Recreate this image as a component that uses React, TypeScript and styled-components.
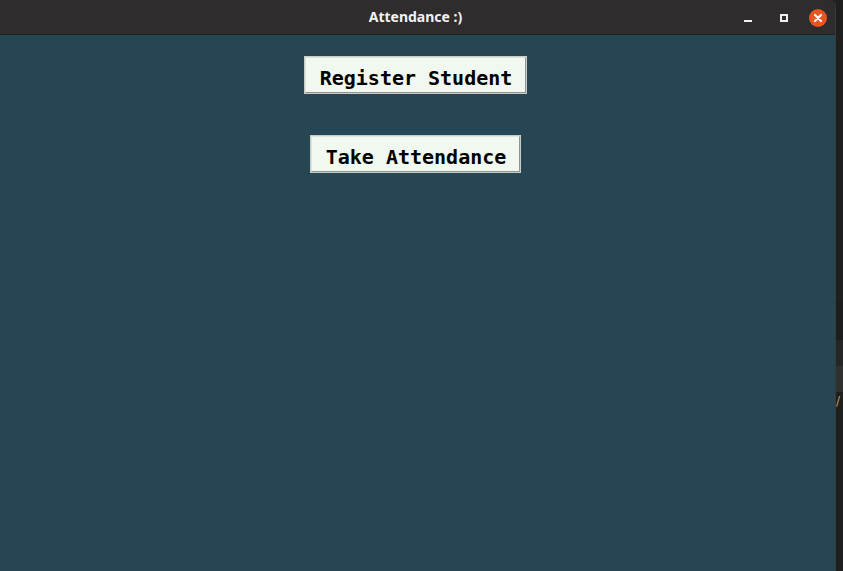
import styled, {createGlobalStyle} from 'styled-components'

const GlobalStyle = createGlobalStyle`
  html, body {
    margin: 0;
    padding: 0;
    background: #222121;
    overflow: hidden;
  }
  #root {
    height: 100vh;
  }
`

const App = () => {
  return (
    <>
      <GlobalStyle/>
      <Desktop>
        <Window>
          <TitleBar>
            <Title>Attendance :)</Title>
            <Controls>
              <Minimize/>
              <Maximize/>
              <Close>
                <svg width="10" height="10" viewBox="0 0 10 10">
                  <path d="M2 2 L8 8 M8 2 L2 8" stroke="#fff" strokeWidth="2.2" strokeLinecap="round"/>
                </svg>
              </Close>
            </Controls>
          </TitleBar>
          <Content>
            <TkButton>Register Student</TkButton>
            <TkButton>Take Attendance</TkButton>
          </Content>
        </Window>
        <SideStrip>
          <StripBlock h={40} bg='#1d1d1d'/>
          <StripBlock h={26} bg='#262626'/>
          <StripBlock h={26} bg='#303030'/>
          <Slash>/</Slash>
          <StripBlock h={0} bg='#1f1f1f' grow/>
        </SideStrip>
      </Desktop>
    </>
  )
}

export default App;

const Desktop = styled.div`
  display: flex;
  height: 571px;
  width: 843px;
`
const Window = styled.div`
  width: 836px;
  display: flex;
  flex-direction: column;
  border-right: 1px solid #3a3a3a;
  box-sizing: border-box;
  border-top-right-radius: 6px;
  overflow: hidden;
`
const TitleBar = styled.div`
  height: 35px;
  flex-shrink: 0;
  background: #2e2c2c;
  border-bottom: 1px solid #232222;
  box-sizing: border-box;
  display: flex;
  align-items: center;
  justify-content: center;
  position: relative;
`
const Title = styled.div`
  font-family: "Noto Sans", "DejaVu Sans", sans-serif;
  font-weight: bold;
  font-size: 14px;
  color: #f2f2f2;
  margin-left: -4px;
  margin-top: -1px;
`
const Controls = styled.div`
  position: absolute;
  right: 8px;
  top: 0;
  height: 35px;
  display: flex;
  align-items: center;
`
const Minimize = styled.div`
  width: 8px;
  height: 2px;
  background: #f0f0f0;
  margin-top: 6px;
  margin-right: 28px;
`
const Maximize = styled.div`
  width: 8px;
  height: 8px;
  border: 2px solid #f0f0f0;
  box-sizing: border-box;
  margin-right: 21px;
`
const Close = styled.div`
  width: 18px;
  height: 18px;
  border-radius: 50%;
  background: #e95420;
  display: flex;
  align-items: center;
  justify-content: center;
`
const Content = styled.div`
  flex: 1;
  background: #264653;
  display: flex;
  flex-direction: column;
  align-items: center;
  padding-top: 21px;
  padding-right: 4px;
  gap: 41px;
`
const TkButton = styled.button`
  height: 38px;
  box-sizing: border-box;
  padding: 6px 13px 0 14px;
  background: #f0f8ef;
  border: 2px solid;
  border-color: #dfe4df #8f9490 #8f9490 #dfe4df;
  outline: 1px solid #c9ccc9;
  outline-offset: -1px;
  font-family: "DejaVu Sans Mono", "Liberation Mono", monospace;
  font-weight: bold;
  font-size: 20px;
  color: #000;
  line-height: 1;
`
const SideStrip = styled.div`
  flex: 1;
  display: flex;
  flex-direction: column;
  background: #1f1f1f;
  padding-top: 300px;
`
const StripBlock = styled.div<{h:number, bg:string, grow?:boolean}>`
  height: ${({h})=>h}px;
  background: ${({bg})=>bg};
  flex-grow: ${({grow})=>grow ? 1 : 0};
`
const Slash = styled.div`
  height: 18px;
  font-family: "DejaVu Sans", sans-serif;
  font-size: 12px;
  color: #c89a5a;
  line-height: 18px;
`
